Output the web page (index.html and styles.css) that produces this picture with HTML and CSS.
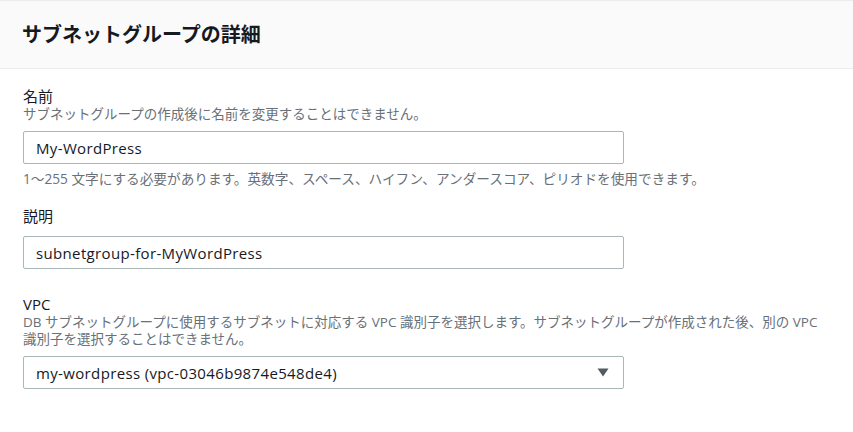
FILE: index.html
```html
<!DOCTYPE html>
<html lang="ja">
<head>
<meta charset="utf-8">
<title>サブネットグループの詳細</title>
<link rel="stylesheet" href="styles.css">
</head>
<body>
<div class="panel">
  <div class="panel-header">
    <h2 class="panel-title">サブネットグループの詳細</h2>
  </div>
  <div class="panel-body">
    <div class="field">
      <div class="label">名前</div>
      <div class="desc">サブネットグループの作成後に名前を変更することはできません。</div>
      <div class="control">
        <div class="input">My-WordPress</div>
      </div>
      <div class="constraint">1〜255 文字にする必要があります。英数字、スペース、ハイフン、アンダースコア、ピリオドを使用できます。</div>
    </div>
    <div class="field">
      <div class="label">説明</div>
      <div class="control control-solo">
        <div class="input">subnetgroup-for-MyWordPress</div>
      </div>
    </div>
    <div class="field field-vpc">
      <div class="label">VPC</div>
      <div class="desc">DB サブネットグループに使用するサブネットに対応する VPC 識別子を選択します。サブネットグループが作成された後、別の VPC 識別子を選択することはできません。</div>
      <div class="control">
        <div class="input select">
          <span>my-wordpress (vpc-03046b9874e548de4)</span>
          <svg class="caret" width="12" height="9" viewBox="0 0 12 9"><path d="M0.5 0.5 H11.5 L6 8.5 Z" fill="#545b64"/></svg>
        </div>
      </div>
    </div>
  </div>
</div>
</body>
</html>
```
FILE: styles.css
```css
* { box-sizing: border-box; }
html, body {
  margin: 0;
  padding: 0;
  background: #ffffff;
}
body {
  font-family: "Open Sans", "Noto Sans CJK JP", sans-serif;
  color: #16191f;
  width: 853px;
  height: 432px;
  overflow: hidden;
}
.panel-header {
  border-top: 1px solid #eaeded;
  border-bottom: 1px solid #eaeded;
  background: #fafafa;
  height: 69px;
  padding: 22px 22px 0;
}
.panel-title {
  margin: 0;
  font-size: 20px;
  line-height: 24px;
  font-weight: 700;
  color: #16191f;
}
.panel-body {
  padding: 17px 22px 0 23px;
  display: flex;
  flex-direction: column;
  gap: 19px;
}
.field {
  display: flex;
  flex-direction: column;
}
.field-vpc {
  margin-top: 6px;
}
.label {
  font-size: 15px;
  line-height: 20px;
  color: #16191f;
}
.desc {
  font-size: 13.5px;
  line-height: 17px;
  color: #687078;
  width: 810px;
}
.control {
  margin-top: 8px;
  width: 601px;
}
.control-solo {
  margin-top: 10px;
}
.input {
  height: 33px;
  border: 1px solid #aab7b8;
  border-radius: 2px;
  padding: 0 12px;
  display: flex;
  align-items: center;
  font-size: 15px;
  letter-spacing: 0.35px;
  color: #16191f;
  background: #fff;
}
.select {
  justify-content: space-between;
  padding-right: 14px;
}
.caret {
  display: block;
}
.constraint {
  margin-top: 7px;
  font-size: 13.65px;
  line-height: 16px;
  color: #687078;
}
```
